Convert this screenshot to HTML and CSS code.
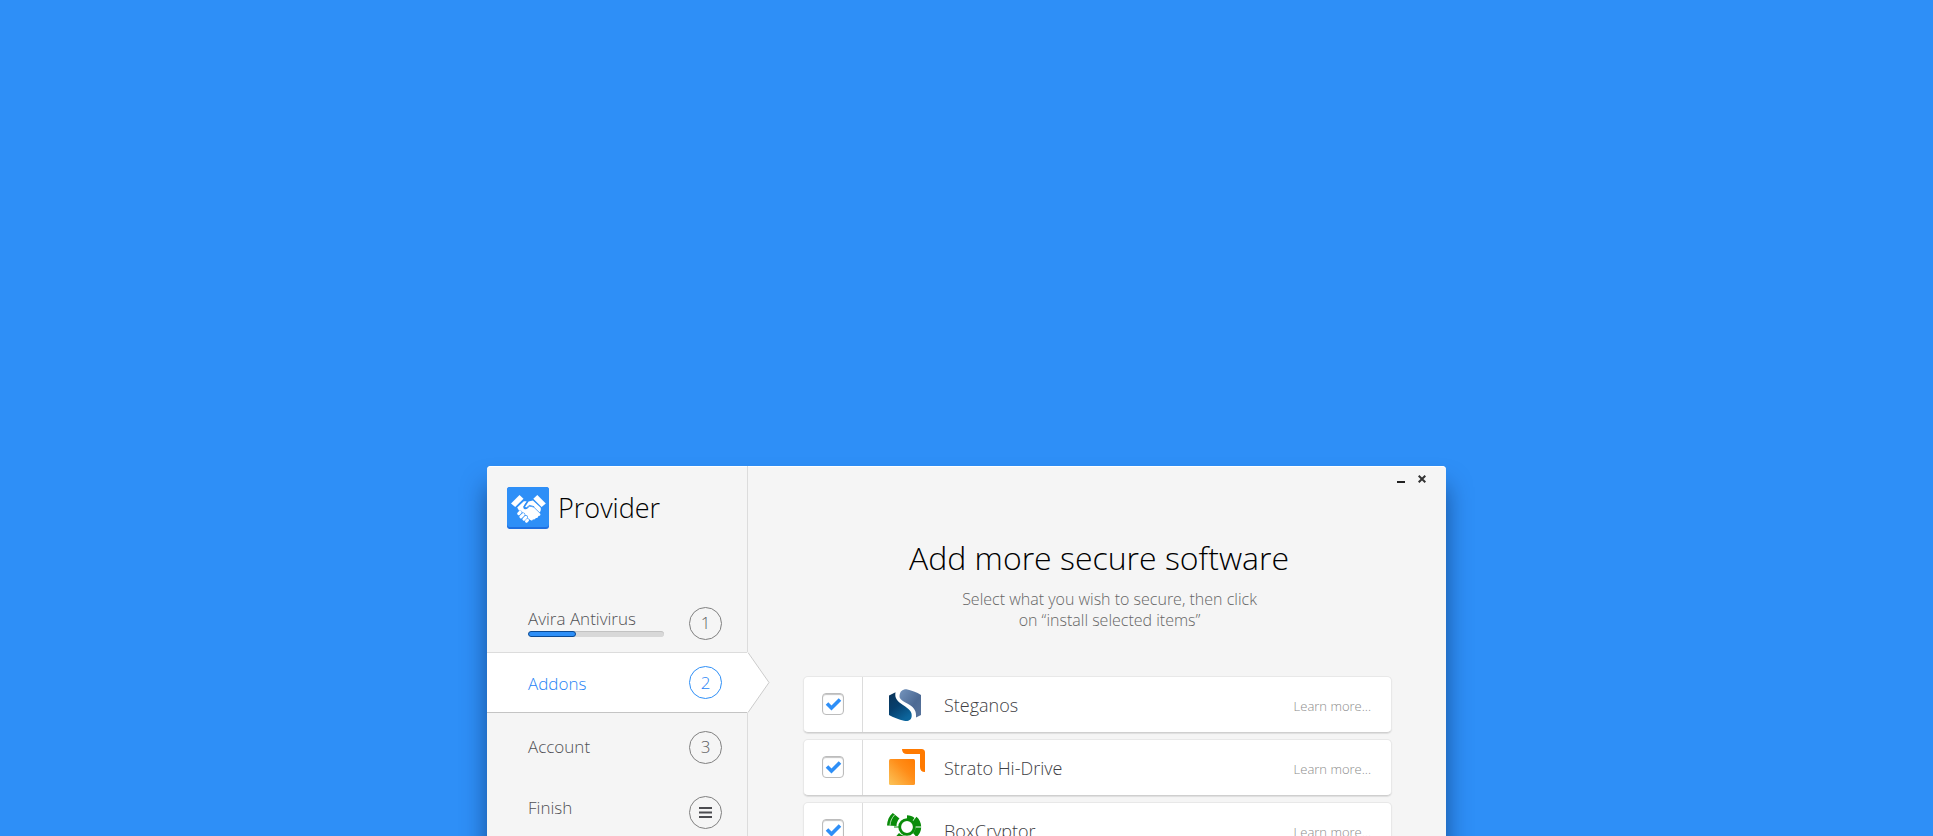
FILE: index.html
```html
<!DOCTYPE html>
<html lang="en">
<head>
<meta charset="utf-8">
<title>Provider – Add more secure software</title>
<link rel="stylesheet" href="styles.css">
</head>
<body>
<div class="window">
  <aside class="sidebar">
    <div class="brand">
      <svg class="brand-logo" viewBox="0 0 42 42" aria-hidden="true">
        <rect width="42" height="42" rx="3" fill="#1f6fe0"/>
        <rect width="42" height="40" rx="3" fill="#2e8ff7"/>
        <g fill="#fff">
          <path d="M4 16.5 12.5 8l4 3.8L8.2 20z"/>
          <path d="M38.8 16.5 30.3 8l-4 3.8 8.3 8.2z"/>
          <path d="M10.200 20.600 16.8 14.200l3 .1-3.4 5.300c-.6 2.6 2.6 3.8 4.4 1.6l1.700-1.800 4.300 1.100 6.200 6c1.200 1.400-.3 3-1.800 2.200.4 1.700-1.100 2.700-2.500 2 .1 1.500-1.500 2.200-2.700 1.500-.4 1.300-1.700 1.600-2.700.8l-2.500-2.100c.4-1.800-.8-3-2.400-2.900 0-1.700-1.200-2.800-2.900-2.500-.4-1.600-1.800-2.400-3.400-1.700z"/>
          <path d="M18.800 20.300 18 19.900l3.600-5.400 4.300-.9 7.600 7c.7 1.700.3 3.500-.8 5l-5.600-5.500-4.900-1.300c-1.300 1.300-2 2.200-3.400 1.500z"/>
        </g>
        <path d="m20.200 14.300-3 4.700c-.5 1.900 1.900 2.900 3.400 1l1.600-1.700 5 1.400" fill="none" stroke="#2e8ff7" stroke-width=".9"/>
        <g stroke="#fff" stroke-width="3" stroke-linecap="round">
          <path d="m11.700 26.600 1.500-1.500M13.900 29.900l2.300-2.300M16.900 32.200l1.900-1.900M19.500 34.200l1-1"/>
        </g>
      </svg>
      <span class="brand-name">Provider</span>
    </div>
    <ol class="steps">
      <li class="step">
        <div class="step-body">
          <label class="step-label" for="install-progress">Avira Antivirus</label>
          <progress class="meter" id="install-progress" value="35" max="100"></progress>
        </div>
        <span class="badge">1</span>
      </li>
      <li class="step step-current" aria-current="step">
        <span class="step-label">Addons</span>
        <span class="badge">2</span>
        <svg class="pointer" viewBox="0 0 23 61" aria-hidden="true"><path d="M0 0h1L22 30.500 1 60.500H0z" fill="#fff"/><path d="M1 .5 22 30.500 1 60.500" fill="none" stroke="#cbcbcb"/></svg>
      </li>
      <li class="step step-account">
        <span class="step-label">Account</span>
        <span class="badge">3</span>
      </li>
      <li class="step step-finish">
        <span class="step-label">Finish</span>
        <span class="badge"><svg width="13" height="11" viewBox="0 0 13 11" aria-hidden="true"><path d="M0 1h13M0 5.500h13M0 10h13" stroke="#4c4c50" stroke-width="2"/></svg></span>
      </li>
    </ol>
  </aside>
  <main class="content">
    <div class="controls">
      <button class="control" type="button" aria-label="Minimize"><svg width="8" height="8" viewBox="0 0 8 8"><path d="M0 7h8" stroke="#222" stroke-width="2"/></svg></button>
      <button class="control" type="button" aria-label="Close"><svg width="8" height="8" viewBox="0 0 8 8"><path d="m.7.7 6.600 6.600M7.300.7.7 7.300" stroke="#333" stroke-width="2"/></svg></button>
    </div>
    <h1 class="title">Add more secure software</h1>
    <p class="subtitle">Select what you wish to secure, then click<br>on “install selected items”</p>
    <ul class="addons">
      <li class="addon">
        <div class="pick"><input class="check" type="checkbox" id="steganos" checked></div>
        <svg class="logo" viewBox="0 -2 36 36" aria-hidden="true">
          <defs>
            <linearGradient id="deep" x1="0" y1="0" x2=".6" y2="1"><stop offset="0" stop-color="#0a3357"/><stop offset=".5" stop-color="#063f6d"/><stop offset="1" stop-color="#0c659c"/></linearGradient>
            <linearGradient id="slate" x1="0" y1="0" x2="1" y2="1"><stop offset="0" stop-color="#7494bd"/><stop offset=".6" stop-color="#4d6a94"/><stop offset="1" stop-color="#58749c"/></linearGradient>
          </defs>
          <path d="M0 6.500 6.500 3.200C5.500 9 8 12 14 16c6.500 4.500 9 6.500 8.700 11-.3 4.500-3.700 5.500-7.700 4.700C10 30.500 4 28.500 0 26z" fill="url(#deep)"/>
          <path d="M10.500 7C11 2.500 13 .3 17.500.3 22 1.300 28 3.300 32 6v20l-5 2.500C27.500 22 25.500 19 20 15.500 14 12 10.300 10.500 10.500 7z" fill="url(#slate)"/>
        </svg>
        <label class="name" for="steganos">Steganos</label>
        <a class="more" href="#steganos">Learn more...</a>
      </li>
      <li class="addon">
        <div class="pick"><input class="check" type="checkbox" id="strato" checked></div>
        <svg class="logo" viewBox="0 1 36 36" aria-hidden="true">
          <defs><linearGradient id="amber" x1="0" y1="1" x2="1" y2="0"><stop offset="0" stop-color="#fbc45a"/><stop offset=".6" stop-color="#ff8d18"/><stop offset="1" stop-color="#ff7a00"/></linearGradient></defs>
          <rect y="10" width="26" height="26" rx="1.500" fill="url(#amber)"/>
          <path d="M13 0h19.500Q36 0 36 3.500V23q-5 0-5-5V5H18q-5 0-5-5z" fill="#ff7a00"/>
        </svg>
        <label class="name" for="strato">Strato Hi-Drive</label>
        <a class="more" href="#strato">Learn more...</a>
      </li>
      <li class="addon">
        <div class="pick"><input class="check" type="checkbox" id="boxcryptor" checked></div>
        <svg class="logo" viewBox="0 0 36 36" aria-hidden="true">
          <path d="M-2 12.500C-1.800 7.500 0 3.200 3.800 0L10.500 5.500C8.500 7.500 7.600 10 7.500 13z" fill="#0a8c0a"/>
          <path d="M1 12.500C1.200 8.500 2.800 5 5.500 2" fill="none" stroke="#fff" stroke-width=".7"/>
          <circle cx="18" cy="14" r="7.300" fill="none" stroke="#0a8c0a" stroke-width="2.800"/>
          <path d="M18 2.300c3 0 5.600.9 7.500 2.600L22.500 9a8 8 0 0 0-4.500-2zM27.500 3.800c3 2.500 4.500 6 4.700 9.700h-6c-.2-2-.9-3.700-2.300-5.300zM32.200 14.500c-.2 4-2 7.200-4.700 9.500l-3.500-4c1.500-1.400 2.200-3.200 2.400-5.500z" fill="#0a8c0a"/>
          <path d="M10 20 6.500 24c3 3.500 7 5 11 5v-6c-3 0-5.500-1-7.500-3z" fill="#0a8c0a"/>
          <path d="M5 14h5" stroke="#0a8c0a"/>
        </svg>
        <label class="name" for="boxcryptor">BoxCryptor</label>
        <a class="more" href="#boxcryptor">Learn more...</a>
      </li>
    </ul>
  </main>
</div>
</body>
</html>
```
FILE: styles.css
```css
* { box-sizing: border-box; }

body {
  margin: 0;
  height: 100vh;
  overflow: hidden;
  padding-top: 466px;
  background: #2e8ff7;
  font-family: "Open Sans", "Noto Sans", sans-serif;
  font-weight: 300;
  color: #404044;
}

ol, ul { list-style: none; margin: 0; padding: 0; }

.window {
  display: flex;
  max-width: 959px;
  margin: 0 auto;
  border-radius: 4px;
  background: #f5f5f5;
  box-shadow: 0 20px 24px rgba(0, 20, 60, .5), inset 0 1px 0 #fff;
}

/* Sidebar */
.sidebar {
  flex: 0 0 261px;
  border-right: 1px solid #dcdcdc;
}

.brand {
  display: flex;
  align-items: center;
  gap: 9px;
  padding: 20px 20px 0;
}

.brand-logo { width: 42px; height: 42px; }

.brand-name {
  padding-top: 1px;
  font-size: 27px;
  line-height: 42px;
  color: #000;
}

.steps { padding-top: 65px; }

.step {
  position: relative;
  display: flex;
  align-items: center;
  justify-content: space-between;
  height: 58px;
  padding: 0 25px 0 41px;
}

.step-label {
  display: block;
  font-size: 17px;
  line-height: 24px;
  color: #505054;
}

.step-body { width: 136px; padding-bottom: 3px; }

.step-current {
  height: 61px;
  border-top: 1px solid #dcdcdc;
  border-bottom: 1px solid #c4c4c4;
  background: #fff;
}

.step-current .step-label { padding-top: 3px; color: #1f84f5; }
.step-account { height: 68px; }
.step-finish { height: 62px; }
.step-finish .step-label { padding-bottom: 8px; }

.pointer {
  position: absolute;
  top: -1px;
  left: 100%;
  width: 23px;
  height: 61px;
}

.badge {
  display: flex;
  align-items: center;
  justify-content: center;
  width: 33px;
  height: 33px;
  border: 1px solid #808080;
  border-radius: 50%;
  font-size: 17px;
  line-height: 24px;
  color: #5c5c60;
}

.step-current .badge { border-color: #2e8ff7; color: #1f84f5; }

.meter {
  appearance: none;
  display: block;
  width: 136px;
  height: 6px;
  border: 0;
  border-radius: 3px;
  overflow: hidden;
  background: #d8d8d8;
}

.meter::-webkit-progress-bar {
  border-radius: 3px;
  background: #d8d8d8;
  box-shadow: inset 0 1px 0 #c2c2c2;
}

.meter::-webkit-progress-value {
  border: 1px solid #0a4a94;
  border-radius: 3px;
  background: #2e8ff7;
}

/* Content */
.content {
  flex: 1;
  min-width: 0;
  padding: 9px 54px 0 55px;
}

.controls {
  display: flex;
  justify-content: flex-end;
  gap: 13px;
  margin-right: -34px;
}

.control {
  display: flex;
  padding: 0;
  border: 0;
  background: none;
}

.title {
  margin: 53px 0 0;
  padding-left: 3px;
  font-size: 32px;
  font-weight: 300;
  line-height: 44px;
  text-align: center;
  color: #000;
}

.subtitle {
  margin: 9px 0 0;
  padding-left: 24px;
  font-size: 16px;
  line-height: 21px;
  text-align: center;
  color: #666;
}

.addons {
  display: grid;
  gap: 6px;
  margin-top: 45px;
}

.addon {
  display: flex;
  align-items: center;
  height: 57px;
  padding-right: 20px;
  border: 1px solid #e8e8e8;
  border-bottom-color: #cfcfcf;
  border-radius: 5px;
  background: #fff;
  box-shadow: 0 1px 1px #dedede;
}

.pick {
  display: flex;
  align-self: stretch;
  align-items: center;
  justify-content: center;
  width: 59px;
  padding-bottom: 1px;
  border-right: 1px solid #dcdcdc;
}

.check {
  appearance: none;
  width: 22px;
  height: 22px;
  margin: 0;
  border: 1px solid #bcbcbc;
  border-radius: 4px;
  background: #fff url("data:image/svg+xml,%3Csvg xmlns='http://www.w3.org/2000/svg' viewBox='0 0 20 20'%3E%3Cpath d='M4 9.500l4.500 4.500L17 5.500' fill='none' stroke='%232e8ff7' stroke-width='3.600'/%3E%3C/svg%3E") center / 20px no-repeat;
  box-shadow: inset 0 1px 1px #c4c4c4;
}

.logo {
  width: 36px;
  height: 36px;
  margin-left: 26px;
  overflow: visible;
}

.name {
  flex: 1;
  margin-left: 19px;
  font-size: 18px;
  line-height: 24px;
}

.more {
  font-size: 13px;
  line-height: 20px;
  padding-top: 3px;
  color: #8c8c8c;
  text-decoration: none;
}
```
